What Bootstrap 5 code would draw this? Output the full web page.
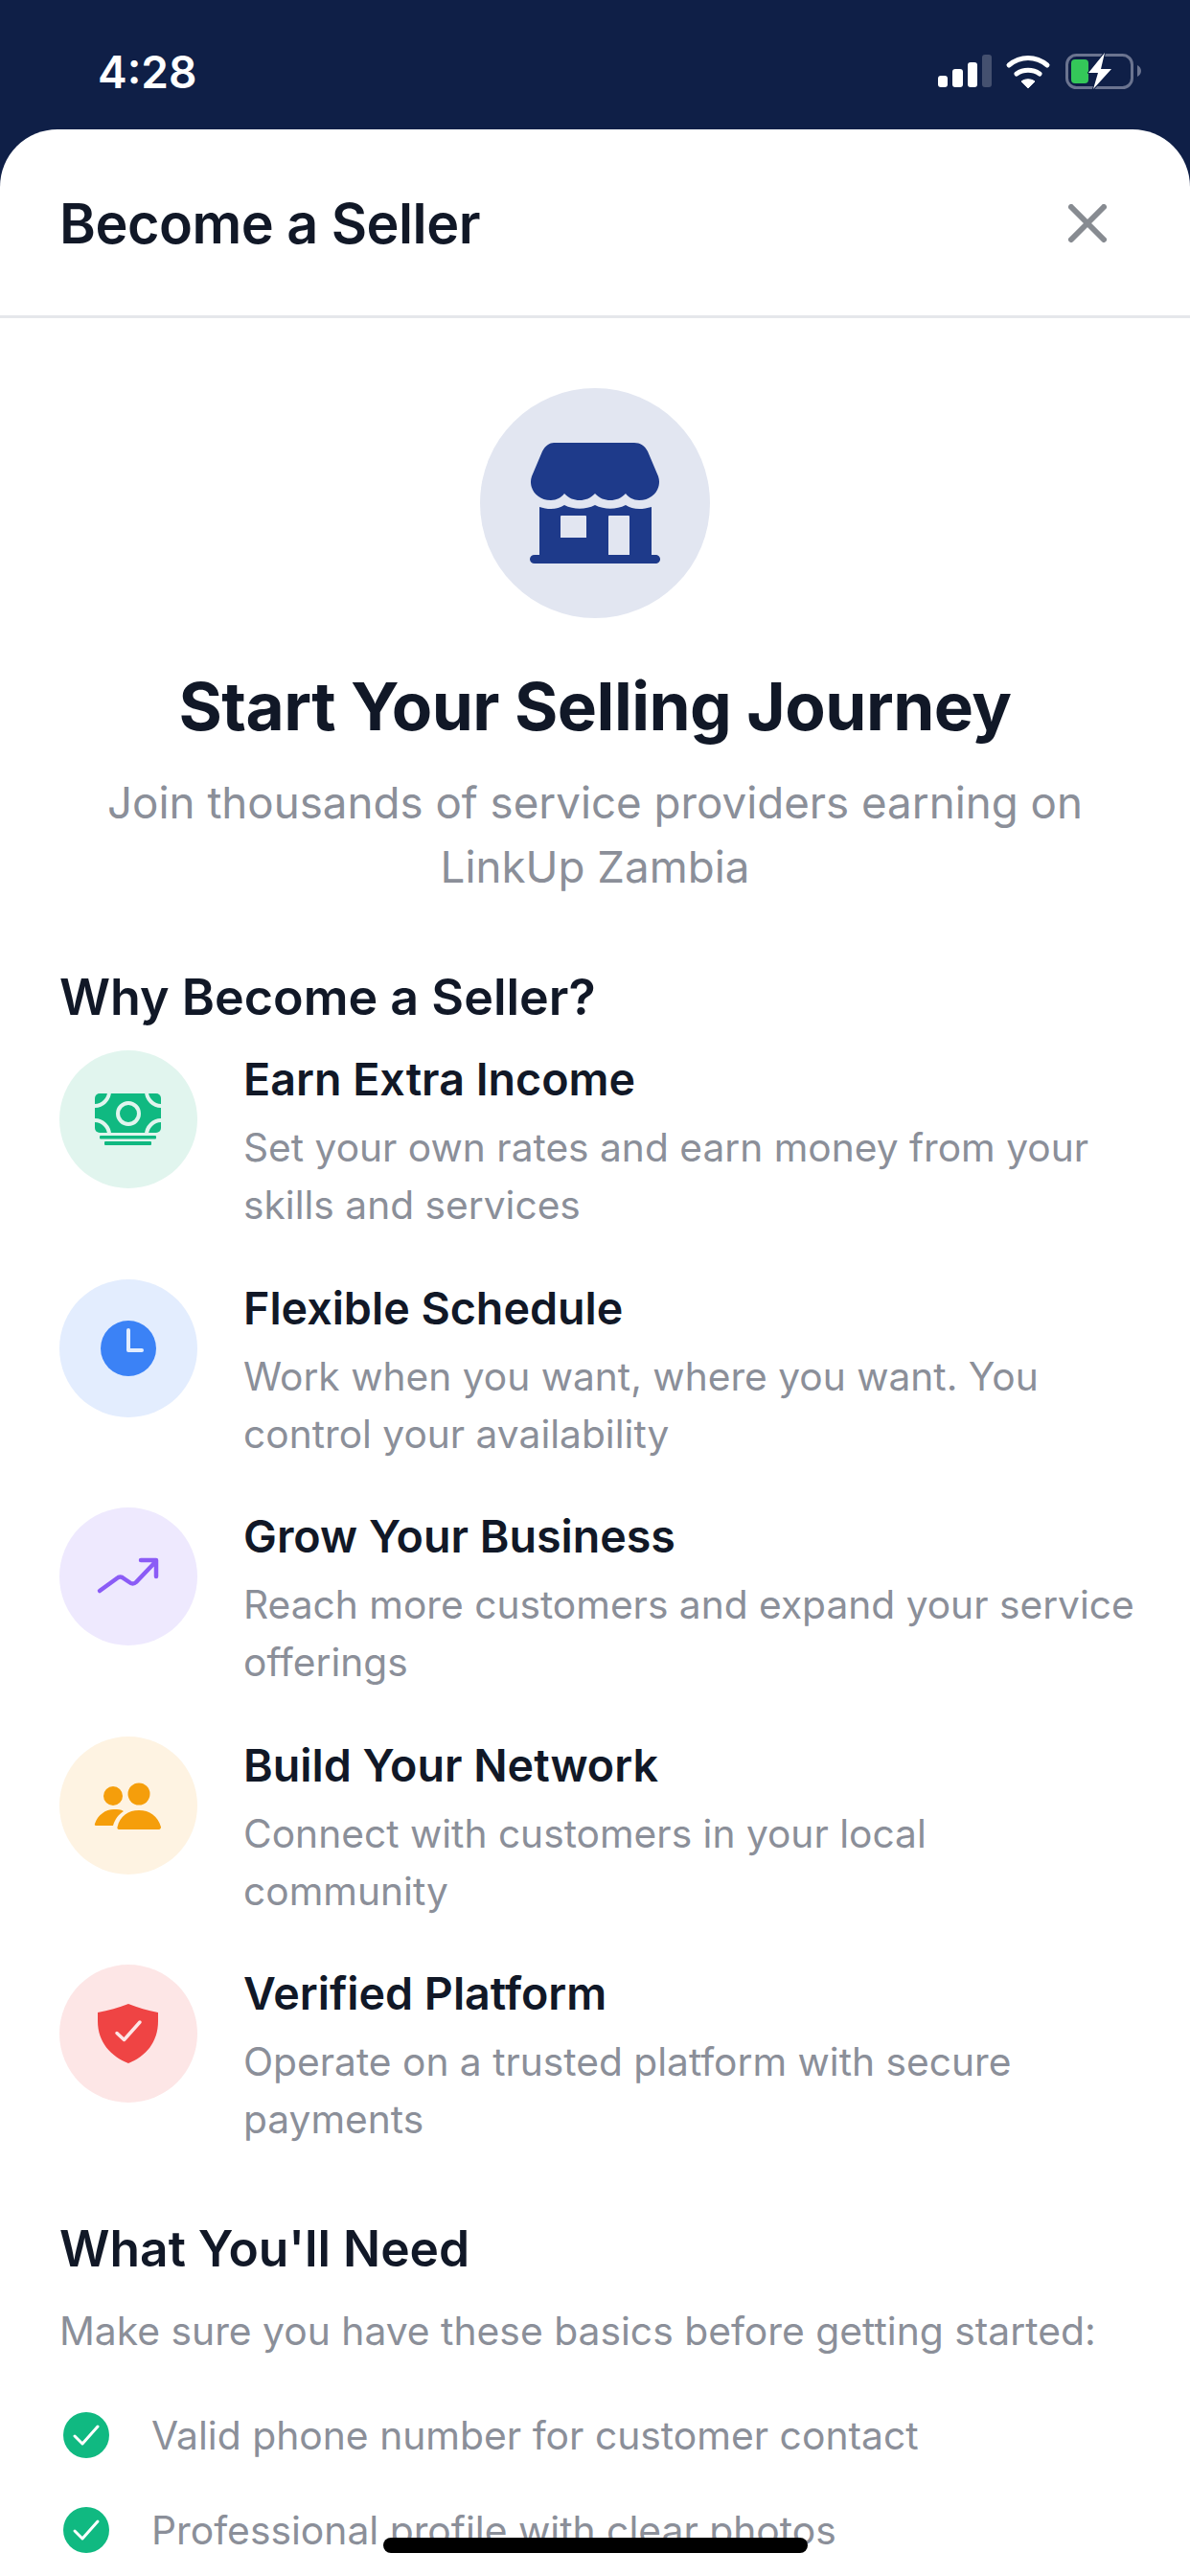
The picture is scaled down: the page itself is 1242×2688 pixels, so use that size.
<!DOCTYPE html>
<html>
<head>
  <meta charset="UTF-8">
  <title>Become a Seller</title>
  <link href="https://cdn.jsdelivr.net/npm/bootstrap@5.3.0/dist/css/bootstrap.min.css" rel="stylesheet">
  <style>
    html, body { height: 2688px; overflow: hidden; }
    body { background: #0f1f47; font-family: Inter, "Liberation Sans", sans-serif; color: #111827; }
    .status-strip { height: 135px; padding: 54px 49px 0 102px; }
    .status-time { color: #fff; font-size: 46px; font-weight: 600; line-height: 42px; }
    .sheet { background: #fff; height: 2553px; border-radius: 60px 60px 0 0; overflow: hidden; }
    .sheet-head { height: 197px; padding: 2px 87px 0 62px; border-bottom: 3px solid #e5e7eb; }
    .sheet-title { font-size: 57.500px; font-weight: 600; letter-spacing: -0.5px; margin: 0; line-height: 64px; }
    .sheet-body { padding: 73px 62px 0; }
    .hero-ring { width: 240px; height: 240px; background: #e2e6f1; }
    .hero-title { font-size: 69.300px; font-weight: 700; line-height: 84px; margin: 50px 0 0; letter-spacing: -0.5px; }
    .hero-sub { font-size: 45.700px; line-height: 67px; color: #8b8f99; margin: 25px 0 0; }
    .block-title { font-size: 52px; font-weight: 600; line-height: 64px; margin: 0; }
    .perk-row { height: 238.5px; gap: 48px; }
    .perk-ring { width: 144px; height: 144px; flex: none; }
    .perk-name { font-size: 46.600px; font-weight: 600; line-height: 56px; margin: 2px 0 14px; }
    .perk-text { font-size: 40.700px; line-height: 60px; color: #8b8f99; margin: 0; white-space: nowrap; }
    .need-text { font-size: 40.800px; line-height: 60px; color: #8b8f99; margin: 0; }
    .need-row { gap: 44px; padding-left: 4px; height: 99px; }
    .home-bar { position: fixed; left: 400px; top: 2648px; width: 443px; height: 16px; background: #000; border-radius: 8px; }
  </style>
</head>
<body>
  <div class="status-strip d-flex justify-content-between align-items-start">
    <div class="status-time">4:28</div>
    <svg width="214" height="42" viewBox="979 54 214 42">
      <rect x="979" y="79" width="10" height="12" rx="3" fill="#fff"/>
      <rect x="994" y="72" width="11" height="19" rx="3" fill="#fff"/>
      <rect x="1010" y="65" width="10" height="26" rx="3" fill="#fff"/>
      <rect x="1025" y="57" width="10" height="34" rx="3" fill="#44506f"/>
      <path d="M1053 68c12-10 28-10 40 0M1061 77c7-5 17-5 24 0" fill="none" stroke="#fff" stroke-width="5" stroke-linecap="round"/>
      <path d="M1066 85c4-3 10-3 14 0l-7 7z" fill="#fff" stroke="#fff" stroke-linejoin="round"/>
      <rect x="1113.500" y="57.500" width="68" height="34" rx="10" fill="none" stroke="#6b7490" stroke-width="3"/>
      <rect x="1118" y="62" width="18" height="25" rx="4" fill="#34c759"/>
      <path d="M1187 68c2 1 4 3 4 6s-2 5-4 6z" fill="#6b7490"/>
      <path d="M1153 55l-17 21h10l-5 17 19-21h-11z" fill="#fff" stroke="#0f1f47" stroke-width="2" paint-order="stroke" stroke-linejoin="round"/>
    </svg>
  </div>

  <div class="sheet">
    <div class="sheet-head d-flex justify-content-between align-items-center">
      <h1 class="sheet-title">Become a Seller</h1>
      <svg width="40" height="40" viewBox="0 0 40 40"><path d="M3 3l34 34M37 3L3 37" stroke="#878b91" stroke-width="6" stroke-linecap="round"/></svg>
    </div>

    <div class="sheet-body">
      <div class="text-center">
        <div class="hero-ring rounded-circle mx-auto">
          <svg width="240" height="240" viewBox="0 0 240 240">
            <path fill="#1e3a8a" d="M77 57h84c6 0 11 3 14 9l11 26c4 11-4 25-20 25-6 0-11-3-14-7-5 5-10 7-16 7s-11-2-16-7c-5 5-10 7-16 7s-11-2-16-7c-3 4-8 7-14 7-16 0-24-14-20-25l11-26c3-6 8-9 12-9z"/>
            <path fill="#1e3a8a" fill-rule="evenodd" d="M62 124c9 3 19 3 26-2 10 5 22 5 32 0 10 5 22 5 32 0 7 5 17 5 27 2v50h4c3 0 5 2 5 4.500s-2 4.500-5 4.500H57c-3 0-5-2-5-4.500s2-4.500 5-4.500h5zM85 133a1 1 0 0 0-1 1v22h27v-22a1 1 0 0 0-1-1zM135 133a1 1 0 0 0-1 1v40h22v-40a1 1 0 0 0-1-1z"/>
          </svg>
        </div>
        <h2 class="hero-title">Start Your Selling Journey</h2>
        <p class="hero-sub">Join thousands of service providers earning on<br>LinkUp Zambia</p>
      </div>

      <h3 class="block-title" style="margin-top:71px">Why Become a Seller?</h3>
      <div style="margin-top:23px">
        <div class="perk-row d-flex align-items-start">
          <div class="perk-ring rounded-circle" style="background:#e1f5ee">
            <svg width="144" height="144" viewBox="0 0 144 144">
              <rect x="37" y="45" width="69" height="41" rx="5" fill="#10b981"/>
              <g fill="none" stroke="#e1f5ee" stroke-width="4">
                <circle cx="72" cy="66" r="11"/>
                <path d="M52 43c0 8-7 15-15 15M91 43c0 8 7 15 15 15M37 73c8 0 15 7 15 15M106 73c-8 0-15 7-15 15"/>
              </g>
              <rect x="42" y="89" width="59" height="3.500" rx="1" fill="#10b981"/>
              <rect x="47" y="95" width="49" height="4" rx="1" fill="#10b981"/>
            </svg>
          </div>
          <div>
            <h4 class="perk-name">Earn Extra Income</h4>
            <p class="perk-text">Set your own rates and earn money from your<br>skills and services</p>
          </div>
        </div>
        <div class="perk-row d-flex align-items-start">
          <div class="perk-ring rounded-circle" style="background:#e3edfe">
            <svg width="144" height="144" viewBox="0 0 144 144">
              <circle cx="72" cy="72" r="29" fill="#3b82f6"/>
              <path d="M72 53v21h14" fill="none" stroke="#e3edfe" stroke-width="4" stroke-linecap="round" stroke-linejoin="round"/>
            </svg>
          </div>
          <div>
            <h4 class="perk-name">Flexible Schedule</h4>
            <p class="perk-text">Work when you want, where you want. You<br>control your availability</p>
          </div>
        </div>
        <div class="perk-row d-flex align-items-start">
          <div class="perk-ring rounded-circle" style="background:#eee9fe">
            <svg width="144" height="144" viewBox="0 0 144 144">
              <path d="M42 87L60 74c2-2 5-2 7 0l6 4c2 2 5 2 7 0l20-21M85 55h16v17" fill="none" stroke="#8b5cf6" stroke-width="4.500" stroke-linecap="round" stroke-linejoin="round"/>
            </svg>
          </div>
          <div>
            <h4 class="perk-name">Grow Your Business</h4>
            <p class="perk-text">Reach more customers and expand your service<br>offerings</p>
          </div>
        </div>
        <div class="perk-row d-flex align-items-start">
          <div class="perk-ring rounded-circle" style="background:#fef3e2">
            <svg width="144" height="144" viewBox="0 0 144 144">
              <circle cx="56" cy="62" r="10" fill="#f59e0b"/>
              <circle cx="83" cy="60" r="11.500" fill="#f59e0b"/>
              <path fill="#f59e0b" d="M38 93c-1 0-1.500-1-1-2 3-9 11-15 20-15 4 0 7 0 10 2-5 3-9 8-11 15zM62 97c-1 0-2-1-1.500-2.500C63 83 72 77 83 77s20 6 23 17.500c0 1.500-1 2.500-2 2.500z"/>
            </svg>
          </div>
          <div>
            <h4 class="perk-name">Build Your Network</h4>
            <p class="perk-text">Connect with customers in your local<br>community</p>
          </div>
        </div>
        <div class="perk-row d-flex align-items-start">
          <div class="perk-ring rounded-circle" style="background:#fde6e6">
            <svg width="144" height="144" viewBox="0 0 144 144">
              <path fill="#ef4444" d="M72 41c10 4 20 7 31 9v9c0 22-13 37-31 44-18-7-32-22-32-44v-9c11-2 22-5 32-9z"/>
              <path d="M60 71.500l7.500 7L84 60" fill="none" stroke="#fde6e6" stroke-width="3.500" stroke-linecap="round" stroke-linejoin="round"/>
            </svg>
          </div>
          <div>
            <h4 class="perk-name">Verified Platform</h4>
            <p class="perk-text">Operate on a trusted platform with secure<br>payments</p>
          </div>
        </div>
      </div>

      <h3 class="block-title" style="margin-top:25px;font-size:51.500px">What You'll Need</h3>
      <p class="need-text" style="margin-top:24px;margin-bottom:30px">Make sure you have these basics before getting started:</p>
      <div class="need-row d-flex align-items-center">
        <svg width="48" height="48" viewBox="0 0 48 48" class="flex-shrink-0"><circle cx="24" cy="24" r="24" fill="#10b981"/><path d="M12 25l8 8 16-18" fill="none" stroke="#fff" stroke-width="3" stroke-linecap="round" stroke-linejoin="round"/></svg>
        <span class="need-text">Valid phone number for customer contact</span>
      </div>
      <div class="need-row d-flex align-items-center">
        <svg width="48" height="48" viewBox="0 0 48 48" class="flex-shrink-0"><circle cx="24" cy="24" r="24" fill="#10b981"/><path d="M12 25l8 8 16-18" fill="none" stroke="#fff" stroke-width="3" stroke-linecap="round" stroke-linejoin="round"/></svg>
        <span class="need-text">Professional profile with clear photos</span>
      </div>
    </div>
  </div>
  <div class="home-bar"></div>
  <script src="https://cdn.jsdelivr.net/npm/bootstrap@5.3.0/dist/js/bootstrap.bundle.min.js"></script>
</body>
</html>
